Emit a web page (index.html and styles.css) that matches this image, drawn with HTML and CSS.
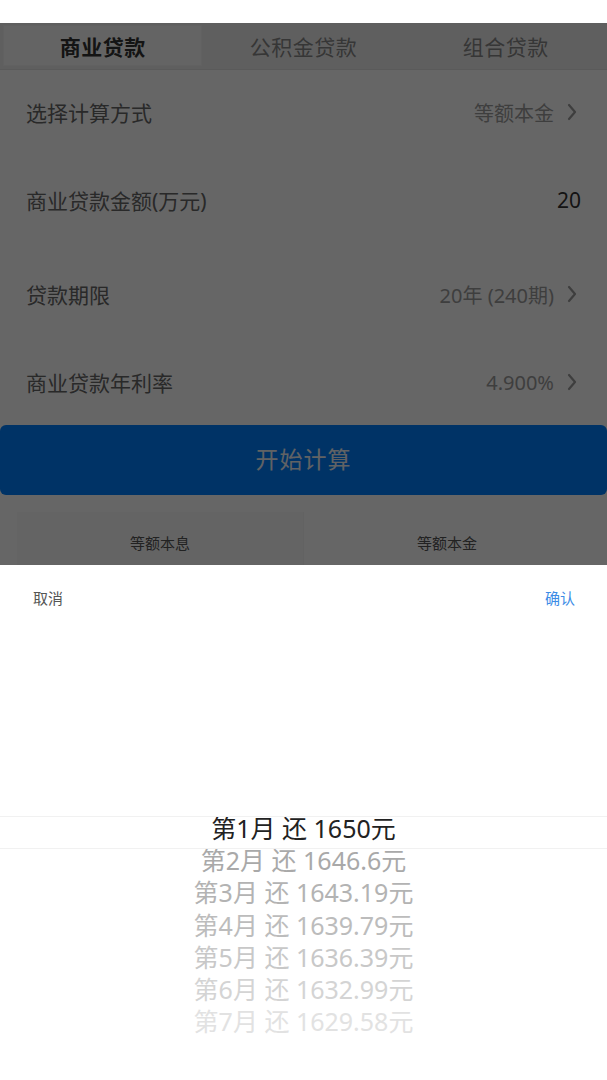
FILE: index.html
```html
<!DOCTYPE html>
<html lang="zh-CN">
<head>
<meta charset="utf-8">
<title>房贷计算器</title>
<link rel="stylesheet" href="styles.css">
</head>
<body>
<div class="topbar"></div>
<main class="calc">
  <nav class="tabs">
    <div class="tab active">商业贷款</div>
    <div class="tab">公积金贷款</div>
    <div class="tab">组合贷款</div>
  </nav>
  <section class="form">
    <div class="row r1">
      <span class="label">选择计算方式</span>
      <span class="value">等额本金<svg class="chev" viewBox="0 0 10 18"><path d="M2 2l6 7-6 7" fill="none" stroke="currentColor" stroke-width="2.2" stroke-linecap="round" stroke-linejoin="round"/></svg></span>
    </div>
    <div class="row r2">
      <span class="label">商业贷款金额(万元)</span>
      <span class="value input">20</span>
    </div>
    <div class="row r3">
      <span class="label">贷款期限</span>
      <span class="value">20年 (240期)<svg class="chev" viewBox="0 0 10 18"><path d="M2 2l6 7-6 7" fill="none" stroke="currentColor" stroke-width="2.2" stroke-linecap="round" stroke-linejoin="round"/></svg></span>
    </div>
    <div class="row r4">
      <span class="label">商业贷款年利率</span>
      <span class="value">4.900%<svg class="chev" viewBox="0 0 10 18"><path d="M2 2l6 7-6 7" fill="none" stroke="currentColor" stroke-width="2.2" stroke-linecap="round" stroke-linejoin="round"/></svg></span>
    </div>
  </section>
  <button class="start">开始计算</button>
  <div class="modes">
    <div class="mode left">等额本息</div>
    <div class="mode right">等额本金</div>
  </div>
</main>
<div class="mask"></div>
<div class="sheet">
  <div class="sheet-head">
    <span class="cancel">取消</span>
    <span class="confirm">确认</span>
  </div>
  <div class="wheel">
    <div class="indicator"></div>
    <div class="item sel">第1月 还 1650元</div>
    <div class="item d1">第2月 还 1646.6元</div>
    <div class="item d2">第3月 还 1643.19元</div>
    <div class="item d3">第4月 还 1639.79元</div>
    <div class="item d4">第5月 还 1636.39元</div>
    <div class="item d5">第6月 还 1632.99元</div>
    <div class="item d6">第7月 还 1629.58元</div>
    <div class="fade"></div>
  </div>
</div>
</body>
</html>
```
FILE: styles.css
```css
* { box-sizing: border-box; }
html, body {
  margin: 0;
  padding: 0;
  background: #fff;
  font-family: "Noto Sans", "Noto Sans CJK SC", sans-serif;
  overflow: hidden;
  height: 1080px;
}
.topbar { height: 23px; background: #fff; }
.calc { background: #fff; }
.tabs {
  display: grid;
  grid-template-columns: 1fr 1fr 1fr;
  height: 47px;
  background: #eeeeee;
  border-bottom: 1px solid #e2e2e2;
}
.tab {
  display: flex;
  align-items: center;
  justify-content: center;
  font-size: 21px;
  color: #888;
  letter-spacing: 0.5px;
}
.tab.active {
  margin: 2px 0 3px 3px;
  background: #fbfbfb;
  border: 1px solid #f2f2f2;
  color: #333;
  font-weight: 700;
}
.row {
  display: flex;
  align-items: center;
  justify-content: space-between;
  padding: 0 30px 0 26px;
  font-size: 21px;
}
.r1 { height: 84px; }
.r2 { height: 92px; }
.r3 { height: 96px; }
.r4 { height: 80px; }
.label { color: #666; }
.value {
  display: flex;
  align-items: center;
  color: #9c9c9c;
  font-size: 20px;
}
.value.input { color: #333; font-size: 21px; margin-right: -4px; }
.chev {
  width: 10px;
  height: 18px;
  margin-left: 13px;
  color: #9c9c9c;
}
.start {
  display: block;
  width: 100%;
  height: 70px;
  margin: 3px 0 0;
  border: none;
  border-radius: 6px;
  background: #0080ff;
  color: #f2f6fb;
  font-family: inherit;
  font-size: 23px;
  letter-spacing: 1px;
  padding: 0 0 4px;
}
.modes {
  display: flex;
  margin: 17px 17px 0;
}
.mode {
  flex: 1;
  height: 64px;
  display: flex;
  align-items: center;
  justify-content: center;
  font-size: 15px;
  color: #555;
  padding-bottom: 4px;
}
.mode.left { background: #fafafa; }
.mode.right { background: #ffffff; border-left: 1px solid #f6f6f6; }
.mask {
  position: fixed;
  top: 23px;
  left: 0;
  right: 0;
  bottom: 0;
  background: rgba(0, 0, 0, 0.6);
}
.sheet {
  position: fixed;
  left: 0;
  right: 0;
  top: 565px;
  bottom: 0;
  background: #fff;
}
.sheet-head {
  display: flex;
  justify-content: space-between;
  align-items: center;
  height: 64px;
  padding: 0 32px 0 33px;
  font-size: 15px;
}
.cancel { color: #555; }
.confirm { color: #3d8ce6; }
.wheel {
  position: relative;
  padding-top: 183px;
}
.indicator {
  position: absolute;
  left: 0;
  right: 0;
  top: 187px;
  height: 33px;
  border-top: 1px solid #f1f1f1;
  border-bottom: 1px solid #f1f1f1;
}
.item {
  height: 32.2px;
  line-height: 32px;
  text-align: center;
  font-size: 25px;
  white-space: pre;
}
.sel { color: #222; }
.d1 { color: #a9a9a9; }
.d2 { color: #b3b3b3; }
.d3 { color: #bcbcbc; }
.d4 { color: #c8c8c8; }
.d5 { color: #d4d4d4; }
.d6 { color: #e2e2e2; }
.fade {
  position: absolute;
  left: 0;
  right: 0;
  top: 420px;
  height: 40px;
  background: linear-gradient(rgba(255,255,255,0), #fff);
}
```
